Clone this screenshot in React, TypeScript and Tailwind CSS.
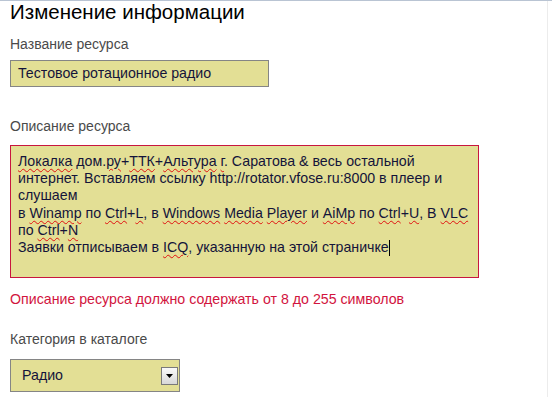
const font = { fontFamily: '"Liberation Sans", Arial, sans-serif' };

function Typo({ children }: { children: React.ReactNode }) {
  return (
    <span className="underline decoration-wavy decoration-[#e01010] decoration-1 underline-offset-2">
      {children}
    </span>
  );
}

export default function App() {
  return (
    <div
      className="w-[552px] h-[397px] bg-white overflow-hidden border-t border-[#b9c4d3] relative"
      style={font}
    >
      <div className="absolute right-[4px] top-0 bottom-0 w-px bg-[#ececec]" />
      <div className="pl-[10px]">
        <h1 className="text-[20.5px] leading-[18px] pt-[2px] text-black">
          Изменение информации
        </h1>

        <div className="text-[14px] leading-[16px] text-[#4a4a4a] mt-[15px]">
          Название ресурса
        </div>
        <div className="mt-[8px] w-[259px] h-[27px] border border-[#858585] bg-[#e3df95] flex items-center pl-[7px] text-[14.2px] text-[#14143a]">
          Тестовое ротационное радио
        </div>

        <div className="text-[14px] leading-[16px] text-[#4a4a4a] mt-[31px]">
          Описание ресурса
        </div>
        <div className="mt-[11px] w-[469px] h-[133px] border border-[#c8163f] bg-[#e3df95] pl-[7px] pt-[7px] text-[14.2px] leading-[17.2px] text-[#14143a]">
          <div>
            <Typo>Локалка</Typo> дом.<Typo>ру</Typo>+<Typo>ТТК</Typo>+<Typo>Альтура</Typo>{' '}
            <Typo>г</Typo>. Саратова &amp; весь остальной
          </div>
          <div>интернет. Вставляем ссылку http://rotator.vfose.ru:8000 в плеер и</div>
          <div>слушаем</div>
          <div>
            в <Typo>Winamp</Typo> по <Typo>Ctrl</Typo>+<Typo>L</Typo>, в{' '}
            <Typo>Windows</Typo> <Typo>Media</Typo> <Typo>Player</Typo> и{' '}
            <Typo>AiMp</Typo> по <Typo>Ctrl</Typo>+<Typo>U</Typo>, В <Typo>VLC</Typo>
          </div>
          <div>
            по <Typo>Ctrl</Typo>+<Typo>N</Typo>
          </div>
          <div className="flex items-center">
            <span>
              Заявки отписываем в <Typo>ICQ</Typo>, указанную на этой страничке
            </span>
            <span className="inline-block w-px h-[16px] bg-black" />
          </div>
        </div>

        <div className="text-[14.2px] leading-[16px] text-[#d2143e] mt-[13px]">
          Описание ресурса должно содержать от 8 до 255 символов
        </div>

        <div className="text-[14px] leading-[16px] text-[#4a4a4a] mt-[24px]">
          Категория в каталоге
        </div>
        <div className="mt-[12px] w-[170px] h-[33px] border border-[#858585] bg-[#e3df95] flex items-center pl-[11px] pr-[1px] text-[14.2px] text-[#14143a]">
          <span className="flex-1">Радио</span>
          <div className="w-[17px] h-[18px] border border-[#7a7a7a] bg-gradient-to-b from-[#fafafa] to-[#d8d8d8] flex items-center justify-center">
            <svg width="7" height="4" viewBox="0 0 7 4">
              <path d="M0 0h7L3.5 4z" fill="#000" />
            </svg>
          </div>
        </div>
      </div>
    </div>
  );
}
